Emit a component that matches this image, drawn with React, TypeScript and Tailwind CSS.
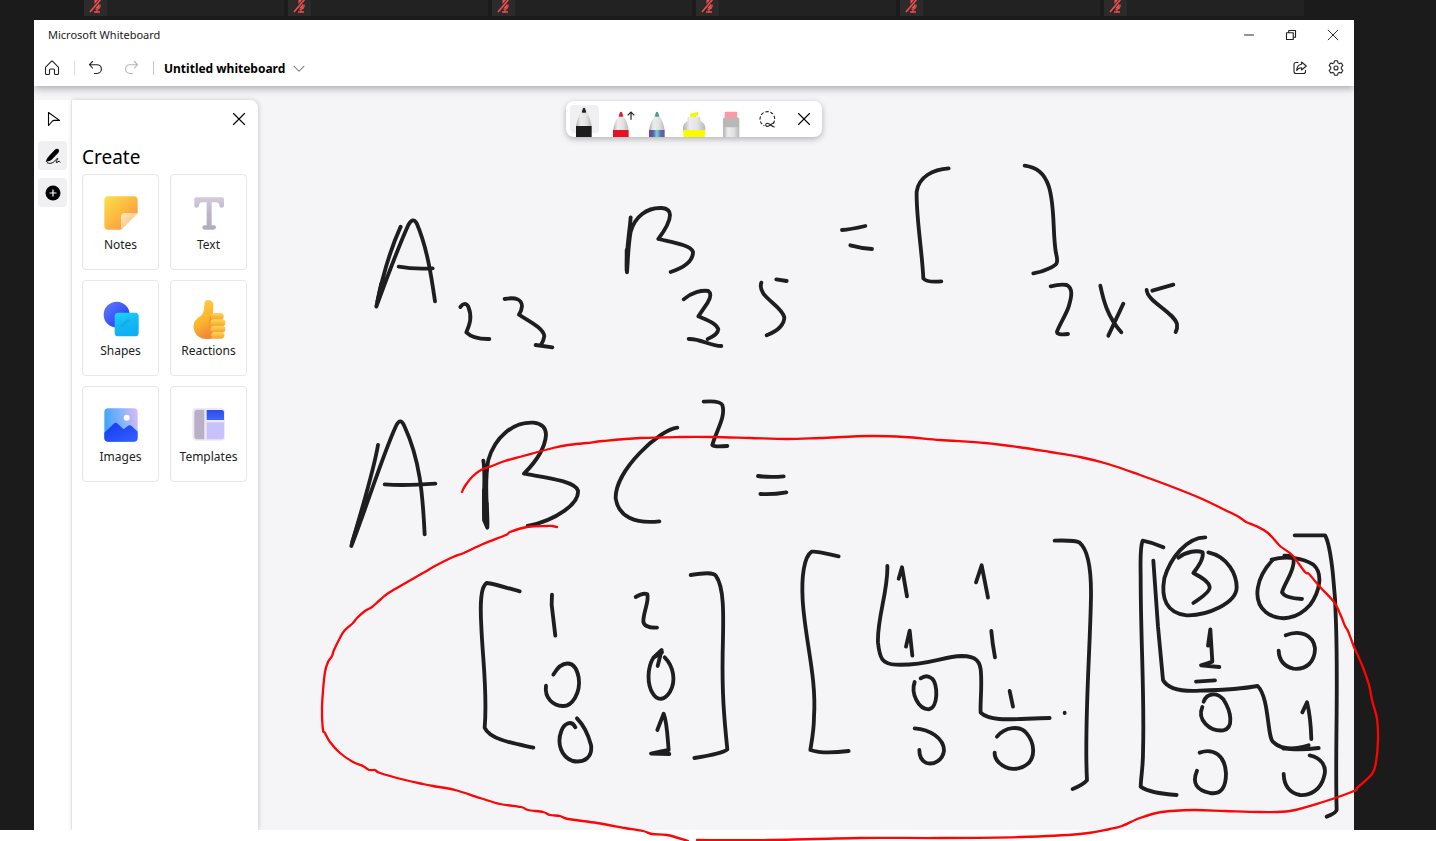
import type { ReactNode } from "react";

type Point = [number, number];

/* ---------- ink ---------- */

function smooth(points: Point[]): string {
  let d = `M${points[0][0]} ${points[0][1]}`;
  for (let i = 0; i < points.length - 1; i++) {
    const p0 = points[i - 1] ?? points[i];
    const p1 = points[i];
    const p2 = points[i + 1];
    const p3 = points[i + 2] ?? p2;
    d += `C${p1[0] + (p2[0] - p0[0]) / 6} ${p1[1] + (p2[1] - p0[1]) / 6} ${p2[0] - (p3[0] - p1[0]) / 6} ${p2[1] - (p3[1] - p1[1]) / 6} ${p2[0]} ${p2[1]}`;
  }
  return d;
}

const redTop: Point[] = [
  [462, 492], [465, 486], [472, 477], [481, 470], [492, 466], [505, 461], [523, 456], [553, 448], [568, 445], [587, 443],
  [603, 441], [640, 438], [680, 437], [713, 437], [750, 438], [787, 439], [820, 438], [870, 436], [905, 437],
  [940, 440], [985, 443], [1018, 447], [1050, 452], [1080, 457], [1108, 464], [1140, 475], [1170, 486],
  [1200, 498], [1225, 510], [1239, 517], [1246, 522], [1256, 526], [1268, 533], [1280, 546], [1292, 555], [1305, 572],
  [1309, 574], [1320, 587], [1334, 602], [1341, 616], [1345, 626], [1348, 631], [1354, 647], [1362, 665],
  [1369, 685], [1372, 700], [1377, 719], [1378, 740], [1376, 762], [1372, 774], [1357, 788], [1354, 791],
  [1323, 802], [1290, 811], [1260, 812], [1225, 811], [1193, 810], [1162, 812], [1140, 818], [1122, 826], [1110, 829],
  [1080, 834], [1020, 837], [940, 838], [860, 838], [770, 840], [697, 840],
];

const redBottom: Point[] = [
  [557, 527], [552, 526], [547, 526], [527, 527], [510, 532], [506, 535], [483, 544], [464, 553], [453, 557],
  [435, 566], [423, 573], [390, 592], [380, 600], [372, 607], [365, 611], [357, 618], [353, 623], [345, 630],
  [341, 636], [334, 650], [332, 656], [328, 662], [325, 672], [323, 691], [322, 710], [323, 730], [325, 733], [330, 742],
  [340, 753], [353, 762], [363, 766], [369, 770], [375, 770], [380, 773], [405, 780], [423, 784], [433, 786], [455, 790],
  [480, 798], [500, 804], [521, 807], [528, 810], [543, 812], [550, 815], [560, 816], [568, 819], [597, 823],
  [625, 828], [643, 831], [652, 834], [667, 835], [688, 841],
];

/* Each cluster of strokes is drawn in thirds of a pixel from its own origin. */
const clusters: { x: number; y: number; d: string[] }[] = [
  {
    x: 340,
    y: 150,
    d: [
      "M182 230C150 300 125 390 109 470C140 385 180 280 205 225Q219 200 230 220C260 290 273 370 285 454",
      "M112 455L124 400M176 350Q220 358 278 355",
      "M361 471Q375 453 385 470C397 500 390 522 379 547Q400 568 448 567",
      "M494 447C530 440 545 450 546 468Q545 482 537 494C575 518 610 535 613 558Q611 572 603 585M587 585L637 592",
      "M872 202C868 255 857 300 861 367C864 330 864 290 872 245C885 200 920 172 965 174Q990 176 990 195C990 215 975 240 955 267C1000 278 1050 285 1059 305C1060 335 1025 355 992 366",
      "M860 362V300",
      "M1031 448C1055 427 1085 420 1105 423Q1118 432 1103 458L1075 499C1105 512 1130 520 1135 538Q1133 555 1103 567M1046 567C1080 565 1110 588 1144 588",
      "M1264 398C1250 440 1325 465 1333 502Q1332 535 1280 556M1309 388L1340 393",
    ],
  },
  {
    x: 820,
    y: 150,
    d: [
      "M66 240Q90 239 136 228M91 286Q120 294 156 297",
      "M386 55C340 58 296 80 290 125C288 200 306 300 310 385Q320 398 364 394",
      "M614 47C650 52 672 68 686 108C706 170 697 250 708 310C716 340 712 345 685 356Q665 366 640 370",
      "M692 409Q720 402 740 405C760 415 755 440 746 470C738 495 720 520 711 545Q710 556 744 552",
      "M841 407C850 450 862 500 904 547M910 461L865 557",
      "M980 420C982 455 1060 485 1071 522Q1073 535 1067 546M997 422L1060 404",
    ],
  },
  {
    x: 320,
    y: 390,
    d: [
      "M174 165C160 250 115 390 94 468C140 350 190 190 228 108Q241 80 253 108C300 210 308 310 314 433",
      "M97 455L128 358M194 283Q250 288 346 281",
      "M490 212C500 270 482 350 502 413C505 360 490 290 505 210C525 140 580 95 640 98Q678 102 678 135C675 175 645 218 612 251C670 262 765 272 774 302C778 340 710 390 623 408",
      "M492 300V390L500 408V340",
      "M1072 113C1020 118 885 240 887 325C895 380 945 402 1018 394",
      "M1151 35Q1200 31 1207 45C1218 80 1190 120 1177 165Q1180 172 1222 168",
      "M1314 258Q1350 263 1391 259M1321 312Q1360 314 1399 307",
    ],
  },
  {
    x: 310,
    y: 560,
    d: [
      "M629 94C595 86 560 72 530 69C512 80 510 130 514 200C518 300 533 400 524 503C540 540 620 552 670 563",
      "M726 104L725 134L736 227",
      "M977 111Q1000 97 1012 103C1018 125 1000 155 1000 185Q1003 204 1041 203",
      "M1142 45C1185 38 1210 36 1218 48C1245 85 1240 180 1238 280C1236 400 1242 470 1252 568Q1240 580 1153 594",
      "M730 344C755 300 795 296 806 352C813 400 785 440 758 438C730 437 703 415 708 377",
      "M1043 318L1055 270L1031 292C1010 325 1012 375 1028 400C1043 425 1065 420 1080 395C1098 365 1092 320 1064 292",
      "M1036 290L1056 277",
      "M796 502C785 480 763 488 754 513C740 550 753 590 788 603C825 610 848 590 843 555Q830 505 801 475",
      "M1042 510L1061 461C1072 490 1073 540 1076 570Q1050 575 1023 581L1078 582",
    ],
  },
  {
    x: 780,
    y: 520,
    d: [
      "M176 109C140 101 110 92 95 95C72 110 64 170 68 240C75 360 110 470 102 590C102 630 95 665 91 690C120 700 160 699 206 693",
      "M322 138C325 210 290 300 294 368C299 415 306 432 348 434C440 438 485 410 545 408C590 408 602 425 603 460C606 510 600 550 602 578C635 610 720 594 809 594",
      "M356 176L366 142L381 229M588 187L605 136L624 233M378 380L389 332L397 407M634 333Q637 370 645 412M689 513L699 560",
      "M404 486C392 520 415 568 446 568C475 565 475 490 455 475Q440 462 422 475",
      "M404 625C450 628 492 655 492 692C488 722 460 735 440 729Q418 720 418 690",
      "M651 650C675 620 720 615 740 640C765 670 765 710 745 730C715 755 680 750 657 728Q643 714 644 698",
      "M854 578L854 579",
      "M824 62Q885 60 899 68C925 90 934 150 933 230C930 400 912 620 921 781Q909 795 878 807",
    ],
  },
  {
    x: 1110,
    y: 510,
    d: [
      "M160 112Q130 98 98 92Q90 110 92 200C92 400 104 550 99 730C99 770 93 800 92 830Q120 850 200 855",
      "M130 152L144 350L159 510C175 540 220 545 270 542C340 540 390 538 443 528C480 565 470 690 492 698C515 722 580 720 626 714",
      "M520 716Q560 717 596 706",
      "M286 82C230 82 180 145 163 205C152 265 170 310 230 316C290 318 380 280 380 232C380 195 355 140 295 127",
      "M205 143C230 124 260 120 278 127C282 145 265 170 250 189C275 202 298 215 299 232Q300 246 250 279",
      "M523 137Q550 135 551 152C553 185 525 215 516 247Q525 264 576 267",
      "M488 150C440 200 425 270 466 305C510 340 565 325 600 285C630 245 640 190 610 164C580 145 530 136 485 149",
      "M554 76H645C665 110 677 260 678 340C685 550 675 720 680 900Q678 910 650 920",
      "M294 407L301 358L307 455Q290 461 273 466L328 471M258 515L315 511",
      "M527 376C570 358 610 375 615 415C615 455 590 480 550 476Q508 466 506 422",
      "M277 591C260 630 300 665 340 661C372 655 364 605 340 568C320 545 290 550 281 575",
      "M269 728C310 713 345 735 348 790C348 830 335 855 300 849C260 840 245 820 261 782",
      "M577 607L591 577Q602 620 604 687",
      "M599 736C635 744 652 770 642 800C632 840 600 857 570 855C535 848 522 825 521 792",
    ],
  },
];

function Ink() {
  return (
    <svg
      className="pointer-events-none absolute top-0 left-0"
      width="1436"
      height="841"
      fill="none"
      strokeLinecap="round"
      strokeLinejoin="round"
      aria-hidden="true"
    >
      {clusters.map((c) => (
        <g key={`${c.x}-${c.y}`} transform={`translate(${c.x} ${c.y}) scale(0.33333)`} stroke="#1e1e1e" strokeWidth="11.5">
          {c.d.map((d) => (
            <path key={d} d={d} />
          ))}
        </g>
      ))}
      <path d={smooth(redTop)} stroke="#fb0505" strokeWidth="2.3" />
      <path d={smooth(redBottom)} stroke="#fb0505" strokeWidth="2.3" />
    </svg>
  );
}

/* ---------- small line icons ---------- */

function Line({ children, size = 16, width = 1.1 }: { children: ReactNode; size?: number; width?: number }) {
  return (
    <svg
      width={size}
      height={size}
      viewBox="0 0 16 16"
      fill="none"
      stroke="currentColor"
      strokeWidth={width}
      strokeLinecap="round"
      strokeLinejoin="round"
      aria-hidden="true"
    >
      {children}
    </svg>
  );
}

const Cross = ({ size = 16 }: { size?: number }) => (
  <Line size={size}>
    <path d="M2.500 2.500l11 11M13.500 2.500l-11 11" />
  </Line>
);

function MutedMic() {
  return (
    <svg width="14" height="14" viewBox="0 0 14 14" fill="none" stroke="#f0504e" aria-hidden="true">
      <path d="M5.500-1h4.500v6a2.200 2.200 0 0 1-4.500 2z" fill="#f0504e" stroke="none" />
      <path d="M11 4.500c.5 4-2 5-4.500 4.900M8 9.500v2.300M5 12h6" strokeWidth="1.300" />
      <path d="M12-1L1 12" strokeWidth="3.400" stroke="#2b2b2b" />
      <path d="M12-1L1 12" strokeWidth="1.600" />
    </svg>
  );
}

/* ---------- pens ---------- */

function PenDefs() {
  return (
    <svg width="0" height="0" className="absolute" aria-hidden="true">
      <defs>
        <linearGradient id="barrel">
          <stop offset="0" stopColor="#b0b0b0" />
          <stop offset=".3" stopColor="#ededed" />
          <stop offset=".65" stopColor="#e2e2e2" />
          <stop offset="1" stopColor="#b8b8b8" />
        </linearGradient>
        <linearGradient id="galaxy">
          <stop offset="0" stopColor="#6a4a94" />
          <stop offset=".25" stopColor="#4c5cae" />
          <stop offset=".5" stopColor="#7fd0d2" />
          <stop offset=".75" stopColor="#4a74ac" />
          <stop offset="1" stopColor="#7c4c94" />
        </linearGradient>
      </defs>
    </svg>
  );
}

function Pen({ body, tip, arrow, raised }: { body: string; tip: string; arrow?: boolean; raised?: boolean }) {
  return (
    <svg width="36" height="36" viewBox="0 0 108 108" aria-hidden="true">
      <g transform={raised ? undefined : "translate(0 12)"}>
        <path d="M47 33Q34 50 30 76H77Q74 50 61 33z" fill="url(#barrel)" />
        <path d="M51 22Q54 19 57 22L61 34Q54 37 47 34z" fill={tip} />
        <path d="M30 75H77V108H30z" fill={body} />
      </g>
      {arrow && <path d="M84 56V33M74 43l10-10 10 10" fill="none" stroke="#222" strokeWidth="3.600" />}
    </svg>
  );
}

function Highlighter() {
  return (
    <svg width="36" height="36" viewBox="0 0 108 108" aria-hidden="true">
      <path d="M42 48V39L66 32V41L60 48z" fill="#f5f500" />
      <path d="M35 50Q35 47 38 47H70Q73 47 73 50V60Q86 66 88 78V88H21V78Q23 66 35 60z" fill="url(#barrel)" />
      <path d="M21 87H88L86 108H23z" fill="#fafa00" />
    </svg>
  );
}

function Eraser() {
  return (
    <svg width="36" height="36" viewBox="0 0 108 108" aria-hidden="true">
      <path d="M35 52V36Q35 32 39 32H69Q73 32 73 36V52z" fill="#fb9aa6" />
      <path d="M30 78H79V108H30z" fill="url(#barrel)" />
      <path d="M30 53Q30 50 33 50H76Q79 50 79 53V79H30z" fill="#b8b8b8" />
    </svg>
  );
}

function Lasso() {
  return (
    <svg width="36" height="36" viewBox="0 0 108 108" fill="none" stroke="#222" strokeWidth="3.300" aria-hidden="true">
      <path d="M72 68A22 22 0 1 0 46 74" strokeDasharray="10 5" />
      <path d="M76 78C67 76 62 66 54 67C48 69 49 77 56 76C64 75 67 67 75 65" strokeLinecap="round" />
    </svg>
  );
}

/* ---------- create panel pictures ---------- */

const Art = ({ children }: { children: ReactNode }) => (
  <svg width="36" height="36" viewBox="0 0 108 108" aria-hidden="true">
    {children}
  </svg>
);

const notes = (
  <Art>
    <defs>
      <linearGradient id="note" x1="0" y1="0" x2="1" y2="1">
        <stop offset="0" stopColor="#fbe04a" />
        <stop offset=".45" stopColor="#fdbb3f" />
        <stop offset="1" stopColor="#f98b4b" />
      </linearGradient>
      <linearGradient id="fold" x1="0" y1="0" x2=".6" y2=".6">
        <stop offset="0" stopColor="#ffe9b8" />
        <stop offset="1" stopColor="#fbc98c" />
      </linearGradient>
    </defs>
    <path d="M16 4H92Q104 4 104 16V54L54 104H16Q4 104 4 92V16Q4 4 16 4z" fill="url(#note)" />
    <path d="M104 54H66Q54 54 54 66V104z" fill="url(#fold)" />
  </Art>
);

const text = (
  <Art>
    <defs>
      <linearGradient id="tee" x1="0" y1="0" x2="0" y2="1">
        <stop offset="0" stopColor="#d3cbdd" />
        <stop offset=".5" stopColor="#bdb4ca" />
        <stop offset="1" stopColor="#b3abc0" />
      </linearGradient>
    </defs>
    <path
      d="M15 7H94Q99 7 99 12V32Q99 38 92 38Q86 38 85 32Q84 22 75 22H62V91H69Q75 91 75 97Q75 104 68 104H41Q34 104 34 97Q34 91 40 91H47V22H34Q25 22 24 32Q23 38 16 38Q10 38 10 32V12Q10 7 15 7z"
      fill="url(#tee)"
    />
  </Art>
);

const shapes = (
  <Art>
    <defs>
      <linearGradient id="disc" x1="0" y1="0" x2="1" y2="1">
        <stop offset="0" stopColor="#637dff" />
        <stop offset="1" stopColor="#1734ee" />
      </linearGradient>
      <linearGradient id="square" x1="0" y1="0" x2="0.300" y2="1">
        <stop offset="0" stopColor="#1fd6fb" />
        <stop offset=".5" stopColor="#14b9f2" />
        <stop offset="1" stopColor="#0cb0f4" />
      </linearGradient>
    </defs>
    <circle cx="41" cy="41" r="39" fill="url(#disc)" />
    <rect x="35" y="35" width="72" height="71" rx="11" fill="url(#square)" />
    <path d="M56 75L75 58" stroke="#0d93de" strokeWidth="8" opacity=".3" strokeLinecap="round" />
  </Art>
);

const reactions = (
  <svg width="36" height="42" viewBox="0 0 108 126" className="-mb-1" aria-hidden="true">
    <defs>
      <linearGradient id="hand" x1="0" y1="0" x2=".4" y2="1">
        <stop offset="0" stopColor="#ffd34e" />
        <stop offset=".6" stopColor="#fcb52d" />
        <stop offset="1" stopColor="#f0893a" />
      </linearGradient>
      <linearGradient id="finger" x1="0" y1="0" x2="0" y2="1">
        <stop offset="0" stopColor="#ffd758" />
        <stop offset="1" stopColor="#f5a12f" />
      </linearGradient>
    </defs>
    <path
      d="M40 14Q40 3 52 3Q66 4 67 20L66 48L80 52V112Q70 122 45 120Q20 118 11 98Q3 80 12 66Q20 55 30 50Q40 42 40 14z"
      fill="url(#hand)"
    />
    <path d="M60 52Q50 80 60 112" stroke="#f09a2c" strokeWidth="4" fill="none" />
    <rect x="60" y="42" width="38" height="21" rx="10" fill="url(#finger)" />
    <rect x="59" y="61" width="44" height="21" rx="10" fill="url(#finger)" />
    <rect x="59" y="80" width="44" height="21" rx="10" fill="url(#finger)" />
    <rect x="61" y="99" width="39" height="20" rx="10" fill="url(#finger)" />
  </svg>
);

const images = (
  <Art>
    <defs>
      <linearGradient id="sky" x1="0" y1=".4" x2="1" y2="0.200">
        <stop offset="0" stopColor="#3ea4fb" />
        <stop offset=".6" stopColor="#8fb5fa" />
        <stop offset="1" stopColor="#dcb9f3" />
      </linearGradient>
      <linearGradient id="hill" x1="0" y1="0" x2="1" y2="1">
        <stop offset="0" stopColor="#1539ef" />
        <stop offset="1" stopColor="#3362ff" />
      </linearGradient>
    </defs>
    <rect x="4" y="4" width="100" height="100" rx="12" fill="url(#sky)" />
    <path d="M4 77L32 50Q38 45 44 50L62 67L74 57Q80 53 86 57L104 74V92Q104 104 92 104H16Q4 104 4 92z" fill="url(#hill)" />
    <circle cx="71" cy="32" r="9" fill="#fff" />
  </Art>
);

const templates = (
  <Art>
    <defs>
      <linearGradient id="tile" x1="0" y1="0" x2="0" y2="1">
        <stop offset="0" stopColor="#2d49ee" />
        <stop offset="1" stopColor="#3f66fb" />
      </linearGradient>
    </defs>
    <rect x="4" y="3" width="98" height="98" rx="12" fill="#edeaf4" />
    <path d="M19 8H40V97H19Q10 97 10 88V17Q10 8 19 8z" fill="#b7b0c6" />
    <path d="M47 9H92Q99 9 99 16V39H47z" fill="url(#tile)" />
    <path d="M47 46H99V90Q99 97 92 97H47z" fill="#c8c2fb" />
  </Art>
);

const cards: { label: string; art: ReactNode }[] = [
  { label: "Notes", art: notes },
  { label: "Text", art: text },
  { label: "Shapes", art: shapes },
  { label: "Reactions", art: reactions },
  { label: "Images", art: images },
  { label: "Templates", art: templates },
];

/* ---------- page sections ---------- */

function TitleBar() {
  return (
    <div className="flex h-[30px] items-center justify-between">
      <span className="pl-[14px] text-[11px] text-[#222]">Microsoft Whiteboard</span>
      <div className="flex text-[#222]">
        <button aria-label="Minimize" className="flex h-[30px] w-[42px] items-center justify-center">
          <Line size={12} width={1.3}>
            <path d="M2 8h12" />
          </Line>
        </button>
        <button aria-label="Restore" className="flex h-[30px] w-[42px] items-center justify-center">
          <Line size={12} width={1.5}>
            <path d="M2 5h9v9H2zM5 5V2h9v9h-3" />
          </Line>
        </button>
        <button aria-label="Close window" className="flex h-[30px] w-[42px] items-center justify-center">
          <Cross size={14} />
        </button>
      </div>
    </div>
  );
}

function CommandBar() {
  return (
    <div className="flex h-9 items-center text-[#222]">
      <button aria-label="Home" className="flex h-9 w-9 items-center justify-center">
        <Line>
          <path d="M1.500 7.300L7 1.700q1-1 2 0l5.500 5.600V13.500q0 1-1 1h-2q-1 0-1-1V10q0-1-1-1h-3q-1 0-1 1v3.500q0 1-1 1h-2q-1 0-1-1z" />
        </Line>
      </button>
      <span className="ml-1 h-[14px] w-px bg-[#dcdcdc]" />
      <button aria-label="Undo" className="ml-[2px] flex h-9 w-9 items-center justify-center">
        <Line>
          <path d="M5.500 1.500L2.500 4.700l3 3.300M2.500 4.700H10a4.300 4.300 0 0 1 0 8.800H7.500" />
        </Line>
      </button>
      <button aria-label="Redo" disabled className="ml-px flex h-9 w-9 items-center justify-center text-[#b5b5b5]">
        <Line>
          <path d="M10.500 1.500l3 3.200-3 3.300M13.500 4.700H6a4.300 4.300 0 0 0 0 8.800h2.500" />
        </Line>
      </button>
      <span className="ml-[3px] h-[14px] w-px bg-[#c4c4c4]" />
      <button className="ml-[10px] flex items-center gap-2 pt-px text-[12px] font-bold text-black">
        Untitled whiteboard
        <span className="text-[#777]">
          <Line size={12} width={1.4}>
            <path d="M1.500 4.500L8 11 14.500 4.500" />
          </Line>
        </span>
      </button>
      <div className="ml-auto flex">
        <button aria-label="Share" className="flex h-9 w-9 items-center justify-center">
          <Line>
            <path d="M6 2.500H4q-2 0-2 2v7q0 2 2 2h7.500q2 0 2-2v-1M9.500 2l4.800 4-4.800 4V7.700Q6.500 7.500 4.700 10.500Q5 5 9.500 4.300z" />
          </Line>
        </button>
        <button aria-label="Settings" className="flex h-9 w-9 items-center justify-center">
          <Line>
            <path d="M6.500.8h3l.5 2 1.300.8 2-.6 1.500 2.600-1.500 1.500v1.800l1.500 1.500-1.500 2.600-2-.6-1.300.8-.5 2h-3l-.5-2-1.300-.8-2 .6L1.200 10.400l1.500-1.500V7.100L1.200 5.600 2.700 3l2 .6L6 2.800z" />
            <circle cx="8" cy="8" r="2" />
          </Line>
        </button>
      </div>
    </div>
  );
}

function Rail() {
  return (
    <nav aria-label="Tools" className="flex w-[37px] flex-col items-center gap-2 bg-white pt-1 text-black">
      <button aria-label="Select" className="flex size-[29px] items-center justify-center">
        <span className="pl-0.5">
          <Line>
            <path d="M2.500 1.500V14.500L6.500 10q.6-.6 1.500-.6h5.500z" />
          </Line>
        </span>
      </button>
      <button aria-label="Inking" className="flex size-[29px] items-center justify-center rounded bg-[#f0eff1]">
        <svg width="16" height="16" viewBox="0 0 48 48" aria-hidden="true">
          <path d="M31 4Q37 0 41 4Q44 9 40 14L20 35Q16 39 10 40L2 42L5 34Q7 29 12 24z" fill="currentColor" />
          <path
            d="M6 44C18 49 25 44 31 37C38 28 42 30 35 38C31 44 35 46 39 41Q43 38 46 43"
            fill="none"
            stroke="currentColor"
            strokeWidth="3"
          />
        </svg>
      </button>
      <button aria-label="Create" className="flex size-[29px] items-center justify-center rounded bg-[#f0eff1]">
        <svg width="16" height="16" viewBox="0 0 16 16" aria-hidden="true">
          <circle cx="8" cy="8" r="7.500" fill="currentColor" />
          <path d="M8 4.500v7M4.500 8h7" stroke="#fff" strokeWidth="1.200" />
        </svg>
      </button>
    </nav>
  );
}

function CreatePanel() {
  return (
    <aside className="w-[187px] rounded-tr-lg border-l border-[#e4e4e6] bg-white pr-[11px] pl-[10px] shadow-[1px_0_5px_rgba(0,0,0,0.16)]">
      <div className="flex h-[38px] items-center justify-end">
        <button aria-label="Close panel" className="flex size-4 items-center justify-center">
          <Cross />
        </button>
      </div>
      <h2 className="flex h-9 items-center pt-0.5 text-[19px] text-black">Create</h2>
      <div className="grid grid-cols-2 gap-x-[11px] gap-y-[10px]">
        {cards.map((c) => (
          <button
            key={c.label}
            className="flex h-24 flex-col items-center rounded-sm border border-[#e6e6e8] text-[12px] leading-4 text-[#222]"
          >
            <span className="flex h-[62px] items-end justify-center pb-[6px]">{c.art}</span>
            <span className="whitespace-nowrap">{c.label}</span>
          </button>
        ))}
      </div>
    </aside>
  );
}

function PenBar() {
  return (
    <div
      role="toolbar"
      aria-label="Pens"
      className="grid h-9 w-64 grid-cols-7 justify-items-center rounded-lg bg-white shadow-[0_2px_6px_rgba(0,0,0,0.28)]"
    >
      <button aria-label="Black pen" className="flex w-full justify-center">
        <span className="mt-1 h-7 w-[29px] rounded bg-[#f0eff1]">
          <span className="-mx-1 -mt-1 flex justify-center">
            <Pen body="#1c1c1c" tip="#222" raised />
          </span>
        </span>
      </button>
      <button aria-label="Red pen">
        <Pen body="#e81123" tip="#d8202f" arrow />
      </button>
      <button aria-label="Galaxy pen">
        <Pen body="url(#galaxy)" tip="#4d9a8f" />
      </button>
      <button aria-label="Highlighter">
        <Highlighter />
      </button>
      <button aria-label="Eraser">
        <Eraser />
      </button>
      <button aria-label="Lasso select">
        <Lasso />
      </button>
      <button aria-label="Close pens">
        <Cross />
      </button>
    </div>
  );
}

export default function App() {
  return (
    <div className="relative flex min-h-screen flex-col overflow-hidden bg-white pb-[11px] font-['Noto_Sans','Open_Sans',sans-serif]">
      <PenDefs />
      <div className="flex flex-1 flex-col bg-[#1b1b1b]">
        <div className="flex gap-1 pl-[84px]">
          {[0, 1, 2, 3, 4, 5].map((i) => (
            <div key={i} className="h-4 w-[200px] bg-[#222]">
              <div className="flex h-4 w-[23px] justify-center bg-[#2b2b2b]">
                <MutedMic />
              </div>
            </div>
          ))}
        </div>
        <main className="mt-1 mr-[82px] ml-[34px] flex flex-1 flex-col overflow-hidden bg-[#f5f5f8]">
          <header className="z-10 bg-white shadow-[0_2px_8px_rgba(0,0,0,0.35)]">
            <TitleBar />
            <CommandBar />
          </header>
          <div className="relative flex flex-1 pt-[14px]">
            <Rail />
            <CreatePanel />
            <div className="absolute inset-x-0 top-[15px] flex justify-center">
              <PenBar />
            </div>
          </div>
        </main>
      </div>
      <Ink />
    </div>
  );
}
